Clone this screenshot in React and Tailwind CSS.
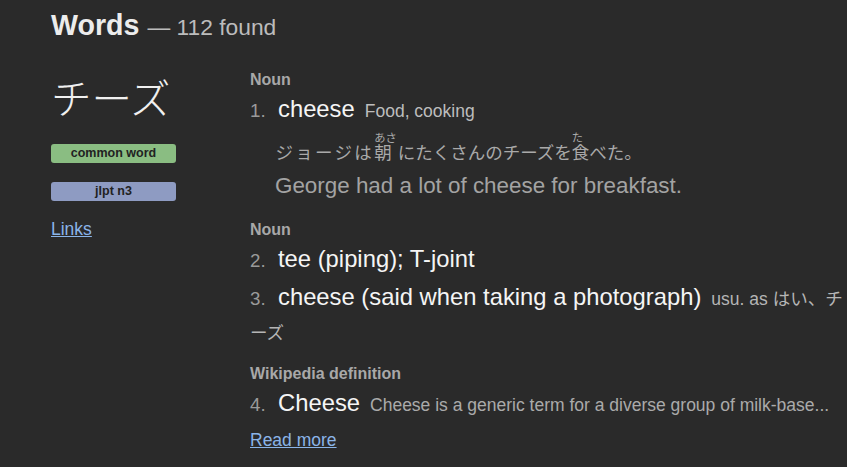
function Seg({ base, ruby, className = "" }) {
  return (
    <div className={"flex flex-col " + className}>
      {ruby ? <span className="text-[11.25px] leading-[14px] tracking-normal">{ruby}</span> : null}
      <span className="leading-none">{base}</span>
    </div>
  );
}

function Row({ num, meaning, tag, className = "" }) {
  return (
    <div className={"text-[23.8px] leading-[32px] " + className}>
      <span className="inline-block w-[28px] text-[18.75px] text-[#9a9a9a]">{num}</span>
      <span className="text-[#f5f5f5]">{meaning}</span>
      {tag ? <span className="ml-[10px] text-[17.5px] text-[#bdbdbd]">{tag}</span> : null}
    </div>
  );
}

export default function App() {
  return (
    <div className="min-h-screen w-full overflow-hidden bg-[#2a2a2a] font-['Liberation_Sans','Noto_Sans_CJK_JP',sans-serif]">
      <div className="pl-[51px] pt-[11px]">
        <h4 className="whitespace-nowrap text-[28.6px] font-bold leading-none text-[#ececec]">
          Words <span className="text-[22.8px] font-normal text-[#bcbcbc]">— 112 found</span>
        </h4>
        <div className="mt-[30.5px] flex">
          <div className="w-[199px] shrink-0">
            <div className="mt-[7px] font-['Noto_Sans_CJK_JP',sans-serif] text-[40.5px] font-light leading-none text-[#f0f0f0]">
              チーズ
            </div>
            <div className="mt-[26.5px] h-[19px] w-[125px] rounded-[3px] bg-[#8abd82] text-center text-[12.5px] font-bold leading-[19px] text-[#222222]">
              common word
            </div>
            <div className="mt-[19px] h-[19px] w-[125px] rounded-[3px] bg-[#8e9bc2] text-center text-[12.5px] font-bold leading-[19px] text-[#222222]">
              jlpt n3
            </div>
            <a href="#" className="mt-[18px] block w-fit text-[17.5px] leading-[20px] text-[#8ab4e8] underline">
              Links
            </a>
          </div>
          <div className="min-w-0 flex-1 whitespace-nowrap">
            <div className="text-[16px] font-bold leading-[20px] text-[#a8a8a8]">Noun</div>
            <Row className="mt-[3px]" num="1." meaning="cheese" tag="Food, cooking" />
            <div className="mt-[4px] flex items-end pl-[25.5px] text-[17.5px] text-[#a9a9a9]">
              <Seg base="ジョージは" className="tracking-[2.3px]" />
              <Seg base="朝" ruby="あさ" />
              <Seg base="にたくさんのチーズを" className="ml-[1px]" />
              <Seg base="食" ruby="た" />
              <Seg base="べた。" />
            </div>
            <div className="mt-[9px] pl-[25px] text-[22.4px] leading-[28px] text-[#a3a3a3]">
              George had a lot of cheese for breakfast.
            </div>
            <div className="mt-[20px] text-[16px] font-bold leading-[20px] text-[#a8a8a8]">Noun</div>
            <Row className="mt-[3px]" num="2." meaning="tee (piping); T-joint" />
            <div className="mt-[4px] text-[23.8px] leading-[32px]">
              <span className="inline-block w-[28px] text-[18.75px] text-[#9a9a9a]">3.</span>
              <span className="text-[#f5f5f5]">cheese (said when taking a photograph)</span>
              <span className="ml-[10px] text-[17.5px] text-[#b5b5b5]">
                usu. as はい、チ
                <br />
                ーズ
              </span>
            </div>
            <div className="mt-[15px] text-[16px] font-bold leading-[20px] text-[#a8a8a8]">Wikipedia definition</div>
            <div className="mt-[3px] text-[23.8px] leading-[32px]">
              <span className="inline-block w-[28px] text-[18.75px] text-[#9a9a9a]">4.</span>
              <span className="text-[#f5f5f5]">Cheese</span>
              <span className="ml-[10px] text-[17.5px] text-[#aaaaaa]">
                Cheese is a generic term for a diverse group of milk-base...
              </span>
            </div>
            <a href="#" className="mt-[9px] block w-fit text-[17.5px] leading-[20px] text-[#8ab4e8] underline">
              Read more
            </a>
          </div>
        </div>
      </div>
    </div>
  );
}
